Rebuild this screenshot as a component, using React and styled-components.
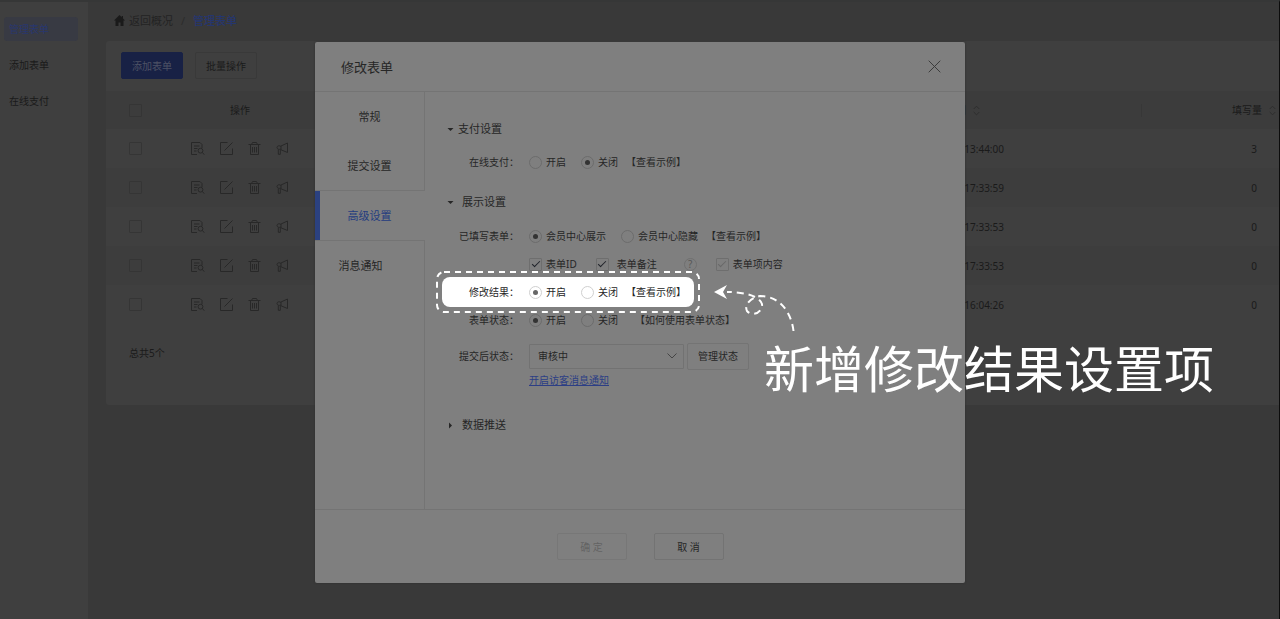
import React from "react";
import styled, { createGlobalStyle, css } from "styled-components";

const GlobalStyle = createGlobalStyle`
  *, *::before, *::after { box-sizing: border-box; }
  body {
    margin: 0;
    background: #393939;
    color: #1a1a1a;
    font-family: "Noto Sans", "Noto Sans CJK SC", sans-serif;
    font-size: 10px;
    line-height: 20px;
  }
  button, input, select { font: inherit; color: inherit; margin: 0; }
  a { color: inherit; text-decoration: none; }
  svg { display: block; flex: none; }
`;

const Page = styled.div`
  display: flex;
  min-height: 100vh;
  border-top: 2px solid #363737;
  border-right: 1px solid #0c0c0c;
  overflow: hidden;
`;

const Sidebar = styled.nav`
  display: flex;
  flex-direction: column;
  gap: 12px;
  flex: none;
  width: 88px;
  padding: 15px 10px 0 4px;
  background: #3f3f3f;
`;

const SideLink = styled.a`
  padding: 0 5px;
  line-height: 24px;
  border-radius: 3px;
  ${(p) => p.$active && css`background: #383a43; color: #28376f;`}
`;

const Main = styled.main`
  flex: 1;
  min-width: 0;
  padding-left: 18px;
`;

const Breadcrumb = styled.div`
  display: flex;
  align-items: center;
  height: 39px;
  padding: 0 8px 2px;
  font-size: 11px;
  color: #232323;
`;

const HomeLink = styled.a`
  display: flex;
  align-items: center;
  gap: 4px;
`;

const Slash = styled.span`
  padding: 0 8px;
  color: #2c2c2c;
`;

const Current = styled.span`
  color: #26366e;
  font-weight: 500;
`;

const Panel = styled.section`
  padding-bottom: 42px;
  background: #3f3f3f;
  border-radius: 3px 0 0 3px;
`;

const Toolbar = styled.div`
  display: flex;
  gap: 12px;
  padding: 11px 15px 12px;
`;

const ToolButton = styled.button`
  width: 62px;
  height: 27px;
  padding: 0;
  border: 1px solid ${(p) => (p.$primary ? "#182145" : "#393939")};
  border-radius: 2px;
  background: ${(p) => (p.$primary ? "#182145" : "transparent")};
  color: ${(p) => (p.$primary ? "#4d5164" : "#1a1a1a")};
`;

const Table = styled.table`
  width: 100%;
  table-layout: fixed;
  border-collapse: collapse;
  th, td { height: 39px; padding: 0; text-align: center; font-weight: 400; }
  thead th { height: 38px; background: #3c3c3c; }
  tbody tr:nth-child(even) { background: #3d3d3d; }
`;

const Col = styled.col`
  width: ${(p) => (p.$w ? `${p.$w}px` : "auto")};
`;

const CellLine = styled.div`
  display: flex;
  align-items: center;
  justify-content: ${(p) => p.$justify || "flex-end"};
  gap: ${(p) => p.$gap || 7}px;
  padding-right: ${(p) => p.$right || 0}px;
  ${(p) => p.$divided && css`border-left: 1px solid #373737; height: 13px;`}
`;

const IconButton = styled.button`
  display: block;
  padding: 0;
  border: 0;
  background: none;
  color: #282828;
`;

const Total = styled.p`
  margin: 0;
  padding: 19px 23px 0;
`;

const Check = styled.input.attrs({ type: "checkbox" })`
  appearance: none;
  display: grid;
  place-items: center;
  flex: none;
  width: 13px;
  height: 13px;
  border: 1px solid ${(p) => (p.$dim ? "#353535" : "#6e6e6e")};
  border-radius: 1px;
  ${(p) => p.$dim && css`margin: 0 auto;`}
  &:checked::before {
    content: "";
    width: 8px;
    height: 4px;
    margin-bottom: 2px;
    border: solid #20232a;
    border-width: 0 0 1px 1px;
    transform: rotate(-45deg);
  }
  &:disabled:checked::before { border-color: #686868; }
`;

const Radio = styled.input.attrs({ type: "radio" })`
  appearance: none;
  display: grid;
  place-items: center;
  flex: none;
  width: 13px;
  height: 13px;
  border: 1px solid ${(p) => (p.$bright ? "#d0d0d0" : "#6c6c6c")};
  border-radius: 50%;
  &:checked::before {
    content: "";
    width: 5px;
    height: 5px;
    border-radius: 50%;
    background: ${(p) => (p.$bright ? "#666" : "#333")};
  }
`;

const Overlay = styled.div`
  position: absolute;
  top: 0;
  left: 0;
  display: flex;
  justify-content: center;
  width: 100%;
  padding-top: 42px;
`;

const Dialog = styled.div`
  position: relative;
  width: 650px;
  max-width: 96vw;
  background: #7f7f7f;
  border-radius: 2px;
  box-shadow: 0 0 2px #2c2c2c;
  color: #262626;
`;

const DialogHead = styled.header`
  display: flex;
  align-items: center;
  justify-content: space-between;
  height: 50px;
  padding: 0 24px 0 26px;
  border-bottom: 1px solid #747474;
`;

const DialogTitle = styled.h1`
  margin: 0;
  font-size: 13px;
  font-weight: 400;
`;

const DialogBody = styled.div`
  display: flex;
`;

const Tabs = styled.div`
  display: flex;
  flex-direction: column;
  flex: none;
  width: 110px;
`;

const Tab = styled.button`
  height: ${(p) => (p.$active ? 51 : 49)}px;
  padding: 0 ${(p) => (p.$marked ? 18 : 0)}px 0 0;
  border: 0 solid #747474;
  border-right-width: 1px;
  background: none;
  font-size: 11px;
  ${(p) => p.$active && css`
    padding-right: 1px;
    border-width: 1px 0;
    box-shadow: inset 5px 0 #2b4180;
    color: #243c80;
  `}
`;

const TabRest = styled.div`
  flex: 1;
  border-right: 1px solid #747474;
`;

const Form = styled.form`
  flex: 1;
  min-width: 0;
  padding: 27px 0 74px;
`;

const SectionHead = styled.h2`
  display: flex;
  align-items: center;
  gap: ${(p) => (p.$tight ? 4 : 8)}px;
  height: 20px;
  margin: ${(p) => p.$top || 0}px 0 ${(p) => p.$bottom || 0}px;
  padding-left: 22px;
  font-size: 11px;
  font-weight: 400;
`;

const Row = styled.div`
  display: flex;
  align-items: center;
  height: 28px;
  margin-top: ${(p) => p.$top || 0}px;
`;

const HighlightRow = styled(Row)`
  position: relative;
  z-index: 1;
  width: fit-content;
  height: 30px;
  margin: -1px 0 -1px 17px;
  padding-right: 8px;
  border-radius: 8px;
  background: #fff;
`;

const Dashes = styled.svg`
  position: absolute;
  top: -6px;
  left: -6px;
  width: calc(100% + 12px);
  height: calc(100% + 12px);
  rect {
    width: calc(100% - 2px);
    height: calc(100% - 2px);
    fill: none;
    stroke: #fff;
    stroke-width: 2px;
    stroke-dasharray: 6 5;
  }
`;

const Label = styled.span`
  flex: none;
  width: ${(p) => (p.$inset ? 77 : 94)}px;
  margin-right: 10px;
  text-align: right;
  white-space: nowrap;
`;

const Options = styled.div`
  display: flex;
  align-items: center;
  gap: ${(p) => p.$gap || 15}px;
`;

const Option = styled.label`
  display: flex;
  align-items: center;
  gap: ${(p) => p.$gap || 4}px;
  white-space: nowrap;
`;

const HelpLink = styled.a`
  margin-left: ${(p) => (p.$far ? 17 : 8)}px;
  white-space: nowrap;
`;

const Help = styled.button`
  width: 13px;
  height: 13px;
  margin-left: 8px;
  padding: 0;
  border: 1px solid #707070;
  border-radius: 50%;
  background: none;
  color: #575757;
  line-height: 11px;
`;

const SelectBox = styled.div`
  display: grid;
  align-items: center;
  width: 155px;
  margin-right: 3px;
  > * { grid-area: 1 / 1; }
  svg { justify-self: end; margin-right: 7px; pointer-events: none; }
`;

const Select = styled.select`
  appearance: none;
  width: 100%;
  height: 25px;
  padding: 0 8px;
  border: 1px solid #727272;
  border-radius: 1px;
  background: none;
`;

const StateButton = styled.button`
  width: 62px;
  height: 27px;
  padding: 0;
  border: 1px solid #747474;
  border-radius: 2px;
  background: none;
`;

const NoticeLink = styled.a`
  display: block;
  width: fit-content;
  margin-left: 104px;
  color: #2c3e85;
  text-decoration: underline;
`;

const DialogFoot = styled.footer`
  display: flex;
  justify-content: center;
  gap: 27px;
  padding: 23px 0;
  border-top: 1px solid #747474;
`;

const FootButton = styled.button`
  width: 70px;
  height: 27px;
  padding: 0;
  border: 1px solid #737373;
  border-radius: 2px;
  background: none;
  &:disabled { color: #636363; border-color: #777; }
`;

const Callout = styled.div`
  position: absolute;
  z-index: 2;
  top: 242px;
  left: 398px;
  color: #fff;
`;

const CalloutText = styled.p`
  margin: 0;
  padding-left: 51px;
  font-family: KaiTi, "Noto Sans CJK SC", sans-serif;
  font-size: 50px;
  font-weight: 400;
  line-height: 64px;
  white-space: nowrap;
`;

const Line = ({ w = 13, h = 13, children, ...rest }) => (
  <svg width={w} height={h} viewBox={`0 0 ${w} ${h}`} fill="none" stroke="currentColor" aria-hidden="true" {...rest}>
    {children}
  </svg>
);

const DetailIcon = () => (
  <Line w={14}>
    <path d="M6 12.500H.5v-12h8.500l2 2v3.500M3 4h5.500M3 6.500h3.500M3 9h2.500" />
    <circle cx="9.500" cy="8.700" r="2.400" />
    <path d="M11.200 10.500l2.300 2.200" />
  </Line>
);
const EditIcon = () => (
  <Line>
    <path d="M7.500.5h-7v12h12v-6M4.500 8.500l8-8" />
  </Line>
);
const TrashIcon = () => (
  <Line>
    <path d="M.5 2.500h12M3.500 2.500L4.500.5h4l1 2M2.500 2.500v10h8v-10M4.500 5v5.500M6.500 5v5.500M8.500 5v5.500" />
  </Line>
);
const HornIcon = () => (
  <Line>
    <path d="M5 4l6.500-3v9.500L5 7.800zM5 4.500c-1-1.200-4-1-4 1 0 1.600 2 2.400 4 1.500M2.300 7.500v4.800h2V7.500" />
  </Line>
);
const Sorter = () => (
  <Line w={7} h={11} stroke="#2e2e2e">
    <path d="M.7 4L3.500 1.200 6.300 4M.7 7l2.800 2.800L6.300 7" />
  </Line>
);
const Caret = ({ open }) => (
  <svg width="7" height="7" viewBox="0 0 7 7" fill="currentColor" aria-hidden="true">
    <path d={open ? "M.5 2h6l-3 3z" : "M2 .5v6l3-3z"} />
  </svg>
);

const ACTIONS = [
  ["查看", DetailIcon],
  ["编辑", EditIcon],
  ["删除", TrashIcon],
  ["推广", HornIcon],
];

const RECORDS = [
  { time: "13:44:00", count: 3 },
  { time: "17:33:59", count: 0 },
  { time: "17:33:53", count: 0 },
  { time: "17:33:53", count: 0 },
  { time: "16:04:26", count: 0 },
];

function RadioPair({ name, labels, value, bright }) {
  return (
    <Options role="radiogroup">
      {labels.map((text, i) => (
        <Option key={text}>
          <Radio name={name} defaultChecked={i === value} $bright={bright} />
          {text}
        </Option>
      ))}
    </Options>
  );
}

function FormTable() {
  return (
    <Table>
      <colgroup>
        <Col $w={58} />
        <Col $w={152} />
        <Col />
        <Col $w={138} />
      </colgroup>
      <thead>
        <tr>
          <th><Check $dim aria-label="全选" /></th>
          <th>操作</th>
          <th><CellLine $right={161}>时间<Sorter /></CellLine></th>
          <th><CellLine $right={3} $divided>填写量<Sorter /></CellLine></th>
        </tr>
      </thead>
      <tbody>
        {RECORDS.map((r, i) => (
          <tr key={i}>
            <td><Check $dim aria-label="选择" /></td>
            <td>
              <CellLine $justify="center" $gap={15}>
                {ACTIONS.map(([name, Icon]) => (
                  <IconButton key={name} type="button" aria-label={name}><Icon /></IconButton>
                ))}
              </CellLine>
            </td>
            <td><CellLine $right={137}>{r.time}</CellLine></td>
            <td><CellLine $right={22}>{r.count}</CellLine></td>
          </tr>
        ))}
      </tbody>
    </Table>
  );
}

function SettingsForm() {
  return (
    <Form>
      <SectionHead $bottom={9} $tight><Caret open />支付设置</SectionHead>
      <Row>
        <Label>在线支付：</Label>
        <RadioPair name="pay" labels={["开启", "关闭"]} value={1} />
        <HelpLink href="#pay">【查看示例】</HelpLink>
      </Row>

      <SectionHead $top={16} $bottom={10}><Caret open />展示设置</SectionHead>
      <Row>
        <Label>已填写表单：</Label>
        <RadioPair name="filled" labels={["会员中心展示", "会员中心隐藏"]} value={0} />
        <HelpLink href="#filled">【查看示例】</HelpLink>
      </Row>
      <Row>
        <Label />
        <Options $gap={19}>
          <Option><Check defaultChecked />表单ID</Option>
          <Option $gap={8}><Check defaultChecked />表单备注</Option>
          <Help type="button">?</Help>
          <Option><Check defaultChecked disabled />表单项内容</Option>
        </Options>
      </Row>
      <HighlightRow>
        <Dashes aria-hidden="true"><rect x="1" y="1" rx="7" /></Dashes>
        <Label $inset>修改结果：</Label>
        <RadioPair name="edit" labels={["开启", "关闭"]} value={0} bright />
        <HelpLink href="#edit">【查看示例】</HelpLink>
      </HighlightRow>
      <Row>
        <Label>表单状态：</Label>
        <RadioPair name="state" labels={["开启", "关闭"]} value={0} />
        <HelpLink href="#state" $far>【如何使用表单状态】</HelpLink>
      </Row>
      <Row $top={8}>
        <Label as="label" htmlFor="after">提交后状态：</Label>
        <SelectBox>
          <Select id="after"><option>审核中</option></Select>
          <Line w={10} h={6} stroke="#454545"><path d="M.5.5L5 5 9.500.5" /></Line>
        </SelectBox>
        <StateButton type="button">管理状态</StateButton>
      </Row>
      <NoticeLink href="#notice">开启访客消息通知</NoticeLink>

      <SectionHead $top={25}><Caret />数据推送</SectionHead>
    </Form>
  );
}

export default function App() {
  return (
    <>
      <GlobalStyle />
      <Page>
        <Sidebar>
          <SideLink href="#manage" $active>管理表单</SideLink>
          <SideLink href="#add">添加表单</SideLink>
          <SideLink href="#online">在线支付</SideLink>
        </Sidebar>
        <Main>
          <Breadcrumb>
            <HomeLink href="#home">
              <svg width="11" height="11" viewBox="0 0 11 11" fill="#1a1a1a" aria-hidden="true">
                <path d="M5.500 0L0 5.500h1.500V11h3V7.500h2V11h3V5.500H11L9 3.500V1H7.700v1.200z" />
              </svg>
              返回概况
            </HomeLink>
            <Slash>/</Slash>
            <Current>管理表单</Current>
          </Breadcrumb>
          <Panel>
            <Toolbar>
              <ToolButton type="button" $primary>添加表单</ToolButton>
              <ToolButton type="button">批量操作</ToolButton>
            </Toolbar>
            <FormTable />
            <Total>总共5个</Total>
          </Panel>
        </Main>
      </Page>

      <Overlay>
        <Dialog role="dialog" aria-labelledby="dialog-title">
          <DialogHead>
            <DialogTitle id="dialog-title">修改表单</DialogTitle>
            <IconButton type="button" aria-label="关闭窗口">
              <Line stroke="#3c3c3c"><path d="M.7.7l11.600 11.600M12.300.7L.7 12.300" /></Line>
            </IconButton>
          </DialogHead>
          <DialogBody>
            <Tabs>
              <Tab type="button">常规</Tab>
              <Tab type="button">提交设置</Tab>
              <Tab type="button" $active>高级设置</Tab>
              <Tab type="button" $marked>消息通知</Tab>
              <TabRest />
            </Tabs>
            <SettingsForm />
          </DialogBody>
          <DialogFoot>
            <FootButton type="button" disabled>确 定</FootButton>
            <FootButton type="button">取 消</FootButton>
          </DialogFoot>
          <Callout>
            <Line w={84} h={50} strokeWidth="2">
              <path d="M80.500 47C78 27 66 12 47 12C37 14 31 21 34 27C39 33 50 29 49 20C46 12 32 8 14 8" strokeDasharray="7 5" />
              <path d="M1 8L14 1 10 8 14 15z" fill="currentColor" stroke="none" />
            </Line>
            <CalloutText>新增修改结果设置项</CalloutText>
          </Callout>
        </Dialog>
      </Overlay>
    </>
  );
}
